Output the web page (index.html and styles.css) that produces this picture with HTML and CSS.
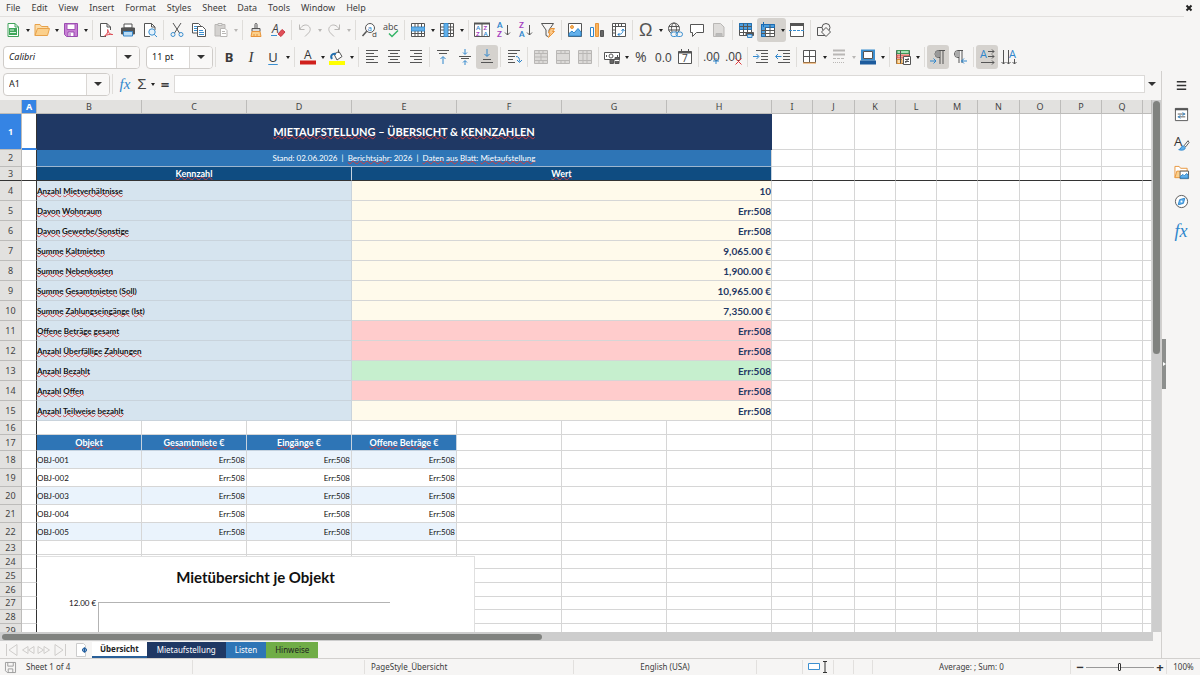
FILE: index.html
```html
<!DOCTYPE html>
<html lang="de">
<head>
<meta charset="utf-8">
<title>Mietaufstellung</title>
<link rel="stylesheet" href="styles.css">
</head>
<body>
<div class="app">
<nav class="menubar">
  <button>File</button><button>Edit</button><button>View</button><button>Insert</button><button>Format</button><button>Styles</button><button>Sheet</button><button>Data</button><button>Tools</button><button>Window</button><button>Help</button>
  <button class="close" aria-label="Close"><svg viewBox="0 0 8 8"><path d="M1.500 1.500l5 5M6.500 1.500l-5 5"/></svg></button>
</nav>

<div class="toolbar" role="toolbar" aria-label="Standard">
  <button class="tb" aria-label="New"><svg viewBox="0 0 16 16"><path d="M3 1.500h7l3.500 3.500v9.500H3z" fill="#fff" stroke="#43a35c"/><path d="M10 1.500V5h3.500" stroke="#43a35c"/><path d="M4 6h8v7H4z" fill="#3fa75a" stroke="none"/><path d="M5 8h4M5 10.500h6" stroke="#d8f2df"/></svg></button><button class="drop" aria-label="New options"></button>
  <button class="tb" aria-label="Open"><svg viewBox="0 0 16 16"><path d="M1 13.500V2.500h5l1.500 2H14v3" fill="#fbdca8" stroke="#e8a24a"/><path d="M1 13.500l2.500-7h12l-2 7z" fill="#fbd08c" stroke="#e8a24a"/></svg></button><button class="drop" aria-label="Open options"></button>
  <button class="tb" aria-label="Save"><svg viewBox="0 0 16 16"><path d="M1.500 1.500h13v13h-11l-2-2z" fill="#c77fd4" stroke="#9a4bb0"/><path d="M4 2h8v5.500H4z" fill="#fff" stroke="#a557b8"/><path d="M5 10h6v4.500H5z" fill="#fff" stroke="#9a4bb0"/><path d="M7 11v3"  stroke="#9a4bb0"/></svg></button><button class="drop" aria-label="Save options"></button>
  <span class="sep"></span>
  <button class="tb" aria-label="Export as PDF"><svg viewBox="0 0 16 16"><path d="M8 14.500H2.500v-13h6.500l3.500 3.500v3" fill="#fff"/><path d="M9 1.500V5h3.500"/><path d="M6.500 14c3-2 3.500-4 3.200-6.500.8 4 2.800 5 5 5-3.200-.5-6 .3-8.200 1.500z" stroke="#de4a53" fill="#fbd5d7"/></svg></button>
  <button class="tb" aria-label="Print"><svg viewBox="0 0 16 16"><path d="M4 2h8v4H4z" fill="#fff"/><path d="M1.500 6h13v6h-13z" fill="#555"/><path d="M3.500 9.500h9V14h-9z" fill="#b9dcf6" stroke="#3a87c8"/></svg></button>
  <button class="tb" aria-label="Print preview"><svg viewBox="0 0 16 16"><path d="M8 14.500H2.500v-13h7l3.500 3.500v3" fill="#fff"/><path d="M9.500 1.500V5H13"/><circle cx="10" cy="10" r="3.200" fill="#e3f1fb" stroke="#3b8fd0"/><path d="M12.200 12.300l2.800 2.700" stroke="#3b8fd0"/></svg></button>
  <span class="sep"></span>
  <button class="tb" aria-label="Cut"><svg viewBox="0 0 16 16"><path d="M4 1l6.500 10M12 1L5.500 11"/><circle cx="4" cy="12.500" r="2" stroke="#3b8fd0"/><circle cx="12" cy="12.500" r="2" stroke="#3b8fd0"/></svg></button>
  <button class="tb" aria-label="Copy"><svg viewBox="0 0 16 16"><path d="M1.500 1.500h6l2 2v7.500h-8z" fill="#fff"/><path d="M3 4.500h4M3 6.500h3M3 8.500h3" stroke="#3b8fd0"/><path d="M6.500 4.500h5l3 3v7h-8z" fill="#fff"/><path d="M8 8.500h4M8 10.500h5M8 12.500h5" stroke="#3b8fd0"/></svg></button>
  <button class="tb" aria-label="Paste" disabled><svg viewBox="0 0 16 16" class="dim"><path d="M2 2.500h10V14H2z" fill="#d4d2d0"/><path d="M5 1.500h4v2H5z" fill="#eee"/><path d="M7.500 6.500h4.500l2 2v6H7.500z" fill="#fff"/><path d="M9 9.500h3M9 11.500h4"/></svg></button><button class="drop" aria-label="Paste options" disabled></button>
  <span class="sep"></span>
  <button class="tb" aria-label="Clone formatting"><svg viewBox="0 0 16 16"><path d="M7 6.500V2.500c0-1.500 2-1.500 2 0v4"/><path d="M4 6.500h8v3H4z" fill="#ddd"/><path d="M4 9.500h8l1 5H3z" fill="#fbd08c" stroke="#e8943a"/><path d="M6 12v2M9 12v2" stroke="#e8943a"/></svg></button>
  <button class="tb" aria-label="Clear formatting"><svg viewBox="0 0 16 16"><text x="2" y="11" font-size="12" font-style="italic" fill="#444">A</text><path d="M1 13.500h6" stroke="#3b8fd0"/><path d="M8 12l4-4.500 3 2.500-4 4.500z" fill="#e04f58" stroke="#c93a44"/></svg></button>
  <span class="sep"></span>
  <button class="tb" aria-label="Undo" disabled><svg viewBox="0 0 16 16" class="dim"><path d="M2.500 2.500v5h5M3 7c2-4 6-5 8.500-3s2 5 0 7L8 14.500"/></svg></button><button class="drop" aria-label="Undo history" disabled></button>
  <button class="tb" aria-label="Redo" disabled><svg viewBox="0 0 16 16" class="dim"><path d="M13.500 2.500v5h-5M13 7c-2-4-6-5-8.500-3s-2 5 0 7L8 14.500"/></svg></button><button class="drop" aria-label="Redo history" disabled></button>
  <span class="sep"></span>
  <button class="tb" aria-label="Find and replace"><svg viewBox="0 0 16 16"><circle cx="9" cy="6" r="4.500" fill="#fff"/><path d="M5.700 9.200L1.500 14" stroke-width="1.500"/><text x="6.500" y="8.500" font-size="8" fill="#2f86cc">a</text><text x="11" y="15" font-size="8" fill="#444">d</text></svg></button>
  <button class="tb" aria-label="Spelling"><svg viewBox="0 0 16 16"><text x="0" y="8" font-size="9" fill="#444">abc</text><path d="M6 11.500l3 3 6-6" stroke="#35b567" stroke-width="1.500"/></svg></button>
  <span class="sep"></span>
  <button class="tb" aria-label="Row"><svg viewBox="0 0 16 16"><path d="M1.500 1.500h13v13h-13z" fill="#fff"/><path d="M1.500 5h13v4h-13z" fill="#63b0ea" stroke="#3b8fd0"/><path d="M1.500 11.500h13M5 1.500V5M8 1.500V5M11.500 1.500V5M5 9v5.500M8 9v5.500M11.500 9v5.500"/></svg></button><button class="drop" aria-label="Row options"></button>
  <button class="tb" aria-label="Column"><svg viewBox="0 0 16 16"><path d="M1.500 1.500h13v13h-13z" fill="#fff"/><path d="M5 1.500h4v13H5z" fill="#63b0ea" stroke="#3b8fd0"/><path d="M11.500 1.500v13M1.500 5H5M1.500 8H5M1.500 11.500H5M9 5h5.500M9 8h5.500M9 11.500h5.500"/></svg></button><button class="drop" aria-label="Column options"></button>
  <span class="sep"></span>
  <button class="tb" aria-label="Sort"><svg viewBox="0 0 16 16" class="az"><path d="M.5 1.500h15v13H.5z" fill="#fff"/><path d="M0 1.500h16" stroke-width="2"/><path d="M8 2v12.500"/><text x="2" y="8" font-size="6" fill="#2f86cc">A</text><text x="2" y="14" font-size="6" fill="#a53fc0">Z</text><text x="9.500" y="8" font-size="6" fill="#a53fc0">Z</text><text x="9.500" y="14" font-size="6" fill="#2f86cc">A</text></svg></button>
  <button class="tb" aria-label="Sort ascending"><svg viewBox="0 0 16 16" class="az"><text x="1" y="6" font-size="8" fill="#2f86cc">A</text><text x="1" y="15" font-size="8" fill="#a53fc0">Z</text><path d="M11.500 3v10M9 10.500l2.500 2.500 2.500-2.500"/></svg></button>
  <button class="tb" aria-label="Sort descending"><svg viewBox="0 0 16 16" class="az"><text x="1" y="6" font-size="8" fill="#a53fc0">Z</text><text x="1" y="15" font-size="8" fill="#2f86cc">A</text><path d="M11.500 3v10M9 10.500l2.500 2.500 2.500-2.500"/></svg></button>
  <button class="tb" aria-label="AutoFilter"><svg viewBox="0 0 16 16"><path d="M1.500 1.500h12L9 8v3M1.500 1.500L6 8v5.500l2 1" fill="none"/><path d="M10.500 6.500h4l-2 3h2l-6 6 1.500-4.500H8.500z" fill="#fbc98a" stroke="#e8943a"/></svg></button>
  <span class="sep"></span>
  <button class="tb" aria-label="Image"><svg viewBox="0 0 16 16"><path d="M1.500 1.500h13v13h-13z" fill="#fff"/><circle cx="5" cy="5" r="1.500" fill="#f7b55c" stroke="#e8943a"/><path d="M2 14v-2.500l3-2.500 2 2 4-4.500 3 3.500v4z" fill="#63b0ea" stroke="#2f86cc"/></svg></button>
  <button class="tb" aria-label="Chart"><svg viewBox="0 0 16 16"><path d="M1.500 5.500h3v9h-3z" fill="#fff" stroke="#2f86cc"/><path d="M6.500 1.500h3v13h-3z" fill="#f9b45d" stroke="#e8943a"/><path d="M11.500 8.500h3v6h-3z" fill="#666"/></svg></button>
  <button class="tb" aria-label="Pivot table"><svg viewBox="0 0 16 16"><path d="M1.500 1.500h13v13h-13z" fill="#fff"/><path d="M1.500 4.500h13M4.500 1.500v13M7.500 2v2M10.500 2v2M2 8h2M2 11h2" /><path d="M7 12.500c4 0 5-2 5-5M10.500 9L12 7l1.500 2M8.500 11L7 12.500 8.500 14" stroke="#2f86cc"/></svg></button>
  <span class="sep"></span>
  <button class="tb" aria-label="Special character"><svg viewBox="0 0 16 16"><text class="symbol" x="1" y="14" fill="#555">Ω</text></svg></button><button class="drop" aria-label="Special character options"></button>
  <button class="tb" aria-label="Hyperlink"><svg viewBox="0 0 16 16"><circle cx="7" cy="6.500" r="5.500"/><ellipse cx="7" cy="6.500" rx="2.500" ry="5.500"/><path d="M2 4.500h10M1.500 8h11"/><rect x="4" y="10" width="6.500" height="4.500" rx="2.200" fill="#f6f5f4" stroke="#3b8fd0"/><rect x="9" y="10" width="6.500" height="4.500" rx="2.200" stroke="#3b8fd0"/></svg></button>
  <button class="tb" aria-label="Comment"><svg viewBox="0 0 16 16"><path d="M1.500 2.500h13v8H7.500l-4 4v-4h-2z" fill="#fff"/></svg></button>
  <button class="tb" aria-label="Headers and footers" disabled><svg viewBox="0 0 16 16" class="dim"><path d="M2.500 1.500h7l3.500 3.500v9.500H2.500z" fill="#dedcda"/><path d="M5 11.500h6v3H5z" fill="#bbb"/></svg></button>
  <span class="sep"></span>
  <button class="tb" aria-label="Define print area"><svg viewBox="0 0 16 16"><path d="M1.500 1.500h12v12h-12z" fill="#fff"/><path d="M1.500 1.500h12v6h-12z" fill="#4d9fdf" stroke="#2370b0"/><path d="M1.500 4.500h12M1.500 10.500h12M5.500 1.500v12M9.500 1.500v12"/><path d="M8 10.500h7.500v3H8z" fill="#555"/><path d="M9.500 12.500h4.500v3H9.500z" fill="#b9dcf6" stroke="#3a87c8"/></svg></button>
  <span class="on"><button class="tb" aria-label="Freeze rows and columns"><svg viewBox="0 0 16 16"><path d="M1.500 2.500h13v12h-13z" fill="#fff"/><path d="M1.500 2.500h13v3H5.500v9h-4z" fill="#4d9fdf" stroke="#1c6cb3"/><path d="M5.500 8.500h9M5.500 11.500h9M10 3v11.500M1.500 8.500h4M1.500 11.500h4M5.500 5.500v9"/><path d="M3.500 0v5M1 2.500h5" stroke="#1c6cb3"/></svg></button><button class="drop" aria-label="Freeze options"></button></span>
  <button class="tb" aria-label="Split window"><svg viewBox="0 0 16 16"><path d="M1.500 1.500h13v13h-13z" fill="#fff"/><path d="M1 2.500h14" stroke-width="3"/><path d="M0 8.500h16" stroke="#3b8fd0" stroke-dasharray="3 1"/></svg></button>
  <span class="sep"></span>
  <button class="tb" aria-label="Show draw functions"><svg viewBox="0 0 16 16"><path d="M1.500 5.500h8v8h-8z"/><circle cx="10" cy="5.500" r="4" fill="#f6f5f4"/><path d="M10 5.500l4.500 4.500-4.500 4.500L5.500 10z" fill="#f6f5f4"/></svg></button>
</div>

<div class="toolbar" role="toolbar" aria-label="Formatting">
  <span class="combo font-name"><input class="italic" aria-label="Font name" value="Calibri"><button aria-label="Font list"></button></span>
  <span class="combo font-size"><input aria-label="Font size" value="11 pt"><button aria-label="Size list"></button></span>
  <span class="sep"></span>
  <button class="tb letter bold">B</button>
  <button class="tb letter ital">I</button>
  <button class="tb letter under">U</button><button class="drop" aria-label="Underline options"></button>
  <span class="sep"></span>
  <button class="tb" aria-label="Font color"><svg viewBox="0 0 16 16"><text x="4" y="10" font-size="12" fill="#333">A</text><path d="M0 11.500h16v4H0z" fill="#d0201c" stroke="none"/></svg></button><button class="drop" aria-label="Font color options"></button>
  <button class="tb" aria-label="Highlighting"><svg viewBox="0 0 16 16"><path d="M0 12h16v4H0z" fill="#ffff00" stroke="none"/><path d="M5 5l5-2.500 3 5-5 3.500z" fill="#fff"/><path d="M9.500 4V.5"/><path d="M3 10c-2-3 0-6 4-5" stroke="#2370b0" stroke-width="2"/></svg></button><button class="drop" aria-label="Highlighting options"></button>
  <span class="sep"></span>
  <button class="tb" aria-label="Align left"><svg viewBox="0 0 16 16"><path d="M2 1.500h12M2 4.500h8M2 7.500h12M2 10.500h8M2 13.500h12"/></svg></button>
  <button class="tb" aria-label="Center"><svg viewBox="0 0 16 16"><path d="M2 1.500h12M4 4.500h8M2 7.500h12M4 10.500h8M2 13.500h12"/></svg></button>
  <button class="tb" aria-label="Align right"><svg viewBox="0 0 16 16"><path d="M2 1.500h12M6 4.500h8M2 7.500h12M6 10.500h8M2 13.500h12"/></svg></button>
  <span class="sep"></span>
  <button class="tb" aria-label="Align top"><svg viewBox="0 0 16 16"><path d="M2 1.500h12M4 4.500h8"/><path d="M8 15V8M5.500 10L8 7.500l2.500 2.500" stroke="#2f86cc"/></svg></button>
  <button class="tb" aria-label="Center vertically"><svg viewBox="0 0 16 16"><path d="M2 7.500h12M4 9.500h8"/><path d="M8 0v5M6 3.500l2 2 2-2M8 16v-4M6 13.500l2-2 2 2" stroke="#2f86cc"/></svg></button>
  <button class="tb on" aria-label="Align bottom"><svg viewBox="0 0 16 16"><path d="M2 13.500h12M4 10.500h8"/><path d="M8 0v7M5.500 5L8 7.500 10.500 5" stroke="#2f86cc"/></svg></button>
  <span class="sep"></span>
  <button class="tb" aria-label="Wrap text"><svg viewBox="0 0 16 16"><path d="M2 1.500h12M2 4.500h9M2 7.500h7M2 10.500h5M2 13.500h7"/><path d="M10 7.500c3 0 3.500 2 3.500 5M11 11l2.500 2.500L16 11" stroke="#2f86cc"/></svg></button>
  <span class="sep"></span>
  <button class="tb" aria-label="Merge and center" disabled><svg viewBox="0 0 16 16" class="dim"><path d="M1.500 1.500h13v13h-13z" fill="#dcdad8"/><path d="M1.500 4.500h13M1.500 11.500h13M6 1.500v3M10 1.500v3M6 11.500v3M10 11.500v3M1.500 8h13M8 4.500v7"/></svg></button>
  <button class="tb" aria-label="Merge cells" disabled><svg viewBox="0 0 16 16" class="dim"><path d="M1.500 1.500h13v13h-13z" fill="#dcdad8"/><path d="M1.500 4.500h13M1.500 11.500h13M6 1.500v3M10 1.500v3M6 11.500v3M10 11.500v3"/></svg></button>
  <button class="tb" aria-label="Unmerge cells" disabled><svg viewBox="0 0 16 16" class="dim"><path d="M1.500 1.500h13v13h-13z" fill="#dcdad8"/><path d="M1.500 4.500h13M1.500 11.500h13M6 1.500v13M10 1.500v13"/></svg></button>
  <span class="sep"></span>
  <button class="tb" aria-label="Currency"><svg viewBox="0 0 16 16"><path d="M.5 3.500h15v7H.5z" fill="#fff"/><circle cx="7" cy="7" r="2"/><path d="M2.500 6v2M13.500 6v2"/><path d="M11 8.500h4v6h-4zM6 10.500h3.500v4H6z" fill="#666"/><path d="M11 11.500h4" stroke="#fff"/></svg></button><button class="drop" aria-label="Currency options"></button>
  <button class="tb" aria-label="Percent"><svg viewBox="0 0 16 16"><text x="2" y="13" font-size="14" fill="#444">%</text></svg></button>
  <button class="tb" aria-label="Number"><svg viewBox="0 0 16 16"><text class="thin" x="0" y="13" fill="#444">0.0</text></svg></button>
  <button class="tb" aria-label="Date"><svg viewBox="0 0 16 16"><path d="M1.500 2.500h13v12h-13z" fill="#fff"/><path d="M1.500 3.500h13" stroke-width="2"/><path d="M4.500 0v3M11.500 0v3"/><text x="5" y="13" font-size="10" fill="#444">7</text></svg></button>
  <span class="sep"></span>
  <button class="tb" aria-label="Add decimal place"><svg viewBox="0 0 16 16"><text class="thin" x="-1" y="12" fill="#444">.00</text><path d="M12 9v6M9 12h6" stroke="#2f86cc"/></svg></button>
  <button class="tb" aria-label="Delete decimal place"><svg viewBox="0 0 16 16"><text class="thin" x="-1" y="12" fill="#444">.00</text><path d="M9.500 9.500l6 6M15.500 9.500l-6 6" stroke="#e0383c"/></svg></button>
  <span class="sep"></span>
  <button class="tb" aria-label="Increase indent"><svg viewBox="0 0 16 16"><path d="M3 1.500h12M8 4.500h7M8 7.500h7M8 10.500h7M3 13.500h12"/><path d="M0 7.500h5.500M3.500 5l2.500 2.500L3.500 10" stroke="#2f86cc"/></svg></button>
  <button class="tb" aria-label="Decrease indent"><svg viewBox="0 0 16 16"><path d="M3 1.500h12M8 4.500h7M8 7.500h7M8 10.500h7M3 13.500h12"/><path d="M1 7.500h5.500M3 5L.5 7.500 3 10" stroke="#2f86cc"/></svg></button>
  <span class="sep"></span>
  <button class="tb" aria-label="Borders"><svg viewBox="0 0 16 16"><path d="M1.500 1.500h12v12h-12z" fill="#fff" stroke="#555"/><path d="M7.500 1.500v12M1.500 7.500h12"/><path d="M1 14h13" stroke="#e8943a"/></svg></button><button class="drop" aria-label="Border options"></button>
  <button class="tb" aria-label="Border style" disabled><svg viewBox="0 0 16 16" class="dim"><path d="M2 1.500h12M2 5.500h12" stroke-width="2"/><path d="M2 9.500h12" stroke-dasharray="3 1"/><path d="M2 13.500h12" stroke-dasharray="1 1"/></svg></button><button class="drop" aria-label="Border style options" disabled></button>
  <button class="tb" aria-label="Border color"><svg viewBox="0 0 16 16"><path d="M2 1.500h12v9H2z" fill="#fff" stroke="#3b8fd0" stroke-width="2"/><path d="M3.500 2.500h9v7h-9z"/><path d="M0 11.500h16v4H0z" fill="#1d5b9d" stroke="none"/></svg></button><button class="drop" aria-label="Border color options"></button>
  <span class="sep"></span>
  <button class="tb" aria-label="Conditional formatting"><svg viewBox="0 0 16 16"><path d="M1.500 1.500h13v13h-13z" fill="#fff"/><path d="M2 1.500h12v3H2z" fill="#a8e3b8" stroke="#3d9957"/><path d="M2 6h12v3H2z" fill="#f6a59c" stroke="#cf5146"/><path d="M2 10.500h5v4H2z" fill="#fbdca8" stroke="#d98d32"/><path d="M5.500 1.500v13"/><path d="M8.500 7.500h7v8h-7z" fill="#fff"/><path d="M10 10.500h4M10 12.500h4M13.500 9l-3 5"/></svg></button><button class="drop" aria-label="Conditional options"></button>
  <span class="sep"></span>
  <button class="tb on" aria-label="Left to right"><svg viewBox="0 0 16 16"><path d="M15 1.500H8.500a3.500 3.500 0 0 0 0 7H10M10 1.500V15M13 1.500V15"/><path d="M9 2H8a3 3 0 0 0 0 6h1z" fill="#999" stroke="none"/><path d="M0 12h5.500M3.500 9.500L6 12l-2.500 2.500" stroke="#2f86cc"/></svg></button>
  <button class="tb" aria-label="Right to left"><svg viewBox="0 0 16 16"><path d="M11 1.500H6a3.500 3.500 0 0 0 0 7h1M7 1.500V14M10 1.500V14"/><path d="M7 2H6a3 3 0 0 0 0 6h1z" fill="#aaa" stroke="none"/><path d="M15 12H9.500M12 9.500L9.500 12l2.500 2.500" stroke="#2f86cc"/></svg></button>
  <span class="sep"></span>
  <button class="tb on" aria-label="Text direction left to right"><svg viewBox="0 0 16 16"><text x="1" y="9" font-size="11" fill="#2f86cc">A</text><path d="M9 2.500h6M9 7.500h6M2 13.500h13M13 .5l2 2-2 2M13 5.500l2 2-2 2M13 11.500l2 2-2 2"/></svg></button>
  <button class="tb" aria-label="Text direction top to bottom"><svg viewBox="0 0 16 16"><text x="8" y="9" font-size="11" fill="#2f86cc">A</text><path d="M2.500 1v14M7.500 1v14M13.500 10v5M.5 13l2 2 2-2M5.500 13l2 2 2-2M11.500 13l2 2 2-2"/></svg></button>
</div>

<div class="workspace">
  <main class="document">
    <div class="formula-bar">
      <span class="combo name-box"><input aria-label="Name box" value="A1"><button aria-label="Name list"></button></span>
      <span class="sep"></span>
      <button class="tb fx" aria-label="Function wizard">fx</button>
      <button class="tb sigma" aria-label="Select function">Σ</button><button class="drop" aria-label="Function options"></button>
      <button class="tb equals" aria-label="Formula">=</button>
      <input class="formula" aria-label="Input line">
      <button class="expand" aria-label="Expand formula bar"></button>
    </div>
    <div class="sheet">
      <div class="canvas">
        <table class="grid" id="grid"></table>
        <figure class="chart">
          <figcaption>Mietübersicht je Objekt</figcaption>
          <div class="plot"><span>12.00 €</span><div class="axis"></div></div>
        </figure>
      </div>
      <div class="vscroll"><div class="vthumb"></div></div>
    </div>
    <div class="hscroll"><div class="hthumb"></div></div>
    <div class="tabs">
      <div class="tab-nav">
        <button aria-label="First sheet"><svg viewBox="0 0 14 14"><path d="M1.500 1v12M12 1.500L4 7l8 5.500z"/></svg></button>
        <button aria-label="Previous sheet"><svg viewBox="0 0 14 14"><path d="M7 3.500L1.500 7 7 10.500zM13 3.500L7.500 7l5.500 3.500z"/></svg></button>
        <button aria-label="Next sheet"><svg viewBox="0 0 14 14"><path d="M1 3.500L6.500 7 1 10.500zM7 3.500L12.500 7 7 10.500z"/></svg></button>
        <button aria-label="Last sheet"><svg viewBox="0 0 14 14"><path d="M12.500 1v12M2 1.500L10 7l-8 5.500z"/></svg></button>
      </div>
      <button class="add" aria-label="Add sheet"><svg viewBox="0 0 14 14"><path d="M1.500.5h7l2 2v11h-9z" fill="#fff" stroke="#ccc"/><circle cx="9.500" cy="7" r="2" fill="#fff" stroke="#1d5b9d"/><path d="M9.500 4.500v5M7 7h5" stroke="#1d5b9d"/></svg></button>
      <button class="tab active">Übersicht</button><button class="tab navy">Mietaufstellung</button><button class="tab blue">Listen</button><button class="tab green">Hinweise</button>
    </div>
  </main>
  <aside class="sidebar">
    <button aria-label="Sidebar settings"><svg viewBox="0 0 16 16"><path d="M3 4h10M3 8h10M3 12h10" stroke="#333" stroke-width="1.500"/></svg></button>
    <button aria-label="Properties"><svg viewBox="0 0 16 16"><path d="M1.500 1.500h13v13h-13z" fill="#fff"/><path d="M1 2.500h14" stroke-width="2"/><path d="M4 7.500h8M4 10.500h8" /><path d="M9 6l2.500 1.500L9 9M7 9l-2.500 1.500L7 12" stroke="#2f86cc"/></svg></button>
    <button aria-label="Styles"><svg viewBox="0 0 16 16"><text x="0" y="11" font-size="14" fill="#333">A</text><path d="M15 5l-4 5 1.500 1.500L16 7z" fill="#fff"/><path d="M5 14.500c3 0 2-4 5-4l2 2c0 3-5 3-7 2z" fill="#63b0ea" stroke="#2f86cc"/></svg></button>
    <button aria-label="Gallery"><svg viewBox="0 0 16 16"><path d="M1 13.500v-12h4.500l1.500 2h7v3" fill="#fff" stroke="#e8943a"/><path d="M1 13.500l2-7h12v7z" fill="#fbd08c" stroke="#e8943a"/><path d="M6.500 6.500h9v8h-9z" fill="#fff"/><path d="M7 14v-2l2.500-2 1.500 1.500L13.500 9l1.500 2v3z" fill="#63b0ea" stroke="#2f86cc"/></svg></button>
    <button aria-label="Navigator"><svg viewBox="0 0 16 16"><circle cx="8" cy="8" r="6.500" fill="#fff"/><path d="M11.500 4.500L10 10l-5.500 1.500L6 6z" fill="#63b0ea" stroke="#2f86cc"/><circle cx="8" cy="8" r="1" fill="#fff" stroke="none"/></svg></button>
    <button class="fx" aria-label="Functions">fx</button>
    <button class="handle" aria-label="Hide sidebar"></button>
  </aside>
</div>

<footer class="status">
  <span class="centered"><svg class="disk" viewBox="0 0 12 12"><path d="M.5.5h11v11h-9l-2-2zM3 .5v4h6v-4M3.500 11.500v-4h5v4"/></svg></span>
  <span>Sheet 1 of 4</span>
  <span></span>
  <span>PageStyle_Übersicht</span>
  <span class="centered">English (USA)</span>
  <span></span>
  <span class="centered"><svg class="insert" viewBox="0 0 20 12"><path d="M.5 2.500h11v6H.5z" fill="#fff" stroke="#3b8fd0"/><path d="M15 .5h4M17 .5v11M15 11.500h4" stroke="#333"/></svg></span>
  <span></span>
  <span></span>
  <span class="centered">Average: ; Sum: 0</span>
  <span class="zoom"><button aria-label="Zoom out">−</button><input type="range" aria-label="Zoom" min="0" max="100" value="49"><button aria-label="Zoom in">+</button></span>
  <span class="centered">100%</span>
</footer>
</div>
<script src="sheet.js"></script>
</body>
</html>
```
FILE: styles.css
```css
* { box-sizing: border-box; }
body { margin: 0; background: #f6f5f4; color: #3c3c3c; font: 9px/12px "Noto Sans", "Open Sans", sans-serif; }
button, input { font: inherit; color: inherit; border: 0; padding: 0; margin: 0; background: none; min-width: 0; }
button { display: inline-flex; align-items: center; justify-content: center; }
svg { display: block; fill: none; stroke: #555; overflow: visible; }
svg text { stroke: none; font-family: "Open Sans", sans-serif; }
svg .thin { font-family: "Liberation Sans", sans-serif; font-size: 12px; }
svg .symbol { font-family: "Liberation Sans", sans-serif; font-size: 18px; }
svg.az text { font-family: Lato, sans-serif; font-weight: 700; }
svg.dim { stroke: #b9b7b5; }

.app { display: flex; flex-direction: column; height: 100vh; overflow: hidden; }

.menubar { display: flex; align-items: center; gap: 11px; height: 17px; padding-left: 6px; margin-right: 16px; border-bottom: 1px solid #e2e0de; flex: none; }
.menubar .close { margin-left: auto; margin-right: -9px; }
.close svg { width: 8px; height: 8px; stroke: #222; stroke-width: 2; }

.toolbar { display: flex; align-items: center; height: 27px; padding: 0 0 1px 2px; flex: none; }
.tb { width: 22px; height: 24px; flex: none; border-radius: 3px; }
.tb svg { width: 16px; height: 16px; }
.drop { width: 7px; height: 24px; flex: none; }
.drop::before { content: ""; border: 2px solid transparent; border-top: 3px solid #222; border-bottom: 0; }
.drop:disabled::before { border-top-color: #b9b7b5; }
.sep { width: 1px; height: 20px; margin: 0 2px; background: #dfddda; flex: none; }
.drop + .sep { margin-left: 3px; }
.on { display: inline-flex; background: #d5d2ce; border-radius: 3px; }
.letter { font-size: 13px; color: #3a3a3a; }
.bold { font-weight: 700; }
.ital { font-family: "Liberation Serif", serif; font-style: italic; font-size: 15px; }
.under { text-decoration: underline #3b8fd0; text-underline-offset: 2px; }

.combo { display: flex; height: 23px; margin-left: 1px; background: #fff; border: 1px solid #cfccc9; border-radius: 4px; flex: none; overflow: hidden; }
.combo input { flex: 1; padding-left: 5px; color: #222; }
.combo button { width: 23px; border-left: 1px solid #dad7d4; background: #f9f8f7; }
.combo button::before, .expand::before { content: ""; border: 4px solid transparent; border-top: 4px solid #333; border-bottom: 0; }
.italic { font-style: italic; }
.font-name { width: 137px; margin-right: 5px; }
.font-size { width: 67px; }
.name-box { width: 107px; }

.workspace { display: flex; flex: 1; min-height: 0; }
.document { display: flex; flex-direction: column; flex: 1; min-width: 0; border-right: 1px solid #d2d0ce; }

.formula-bar { display: flex; align-items: center; padding: 1px 3px 4px 2px; height: 29px; flex: none; }
.fx { font-family: "Liberation Serif", serif; font-style: italic; font-size: 15px; color: #2f86cc; }
.formula-bar .fx { width: 20px; }
.formula-bar .sigma { width: 14px; font-family: "Liberation Sans", sans-serif; font-size: 15px; color: #444; }
.formula-bar .equals { font-size: 15px; font-weight: 700; width: 18px; }
.formula { flex: 1; height: 18px; background: #fff; border: 1px solid #dcdad8; }
.expand { width: 13px; height: 18px; }

.sheet { display: flex; flex: 1; min-height: 0; }
.canvas { position: relative; flex: 1; min-width: 0; overflow: hidden; background: #fff; }
.grid { width: 100%; table-layout: fixed; border-collapse: separate; border-spacing: 0; }
.grid th, .grid td { height: 14px; padding: 0; overflow: hidden; white-space: nowrap; line-height: 10px; border-right: 1px solid #d6d6d6; border-bottom: 1px solid #d6d6d6; }
.c-head { width: 22px; }
.c-a { width: 15px; }
.c-wide { width: 105px; }
.c-std { width: 41px; }
.c-std2 { width: 42px; }
.grid th { background: #e2e1df; border-color: #bdbcba; font-weight: 400; color: #444; }
.grid th.sel { background: #3584e4; color: #fff; font-weight: 700; }
.grid .h13 > * { height: 13px; }
.grid .h16 > * { height: 16px; }
.grid .h17 > * { height: 17px; }
.grid .h18 > * { height: 18px; }
.grid .h20 > * { height: 20px; }
.grid .h36 > * { height: 36px; }
.grid td { font-family: Lato, "Open Sans", sans-serif; font-size: 8px; color: #111; }
.grid td.col-a { border-right-color: #333; }
.grid td.cursor { border-bottom: 2px solid #3584e4; }
.grid .frozen > * { border-bottom-color: #333; }
.grid td.title { background: #1f3864; border-color: #1f3864; color: #fff; font-size: 11px; font-weight: 700; text-align: center; }
.grid td.subtitle { background: #2e75b6; border-bottom-color: #9db6cf; color: #fff; text-align: center; }
.grid td.head { background: #0f4c81; border-right-color: #c5d2df; color: #fff; font-size: 9px; font-weight: 700; text-align: center; }
.grid td.thead { background: #2e75b6; border-color: #c5d2df; color: #fff; font-size: 9px; font-weight: 700; text-align: center; }
.grid td.label { background: #d6e4ef; border-color: #c9d3dc; font-weight: 700; }
.grid td.value { background: #fffaeb; font-size: 10px; font-weight: 700; text-align: right; color: #1f3864; }
.grid td.bad { background: #ffcccc; }
.grid td.good { background: #c6efce; }
.grid td.num { text-align: right; padding-right: 1px; }
.grid td.band { background: #eaf3fc; }
.spell { text-decoration: underline wavy #d23b3b 1px; text-underline-offset: -1px; text-decoration-skip-ink: none; }

.chart { position: absolute; left: 37px; top: 456px; width: 438px; height: 220px; margin: 0; padding: 12px 84px 0 32px; background: #fff; border: 1px solid #e0e0e0; border-left: 0; font-family: Lato, "Open Sans", sans-serif; color: #111; }
.chart figcaption { font-size: 15px; line-height: 16px; font-weight: 700; text-align: center; margin-left: 52px; }
.plot { display: flex; margin-top: 12px; font-size: 8px; gap: 2px; }
.axis { flex: 1; height: 170px; margin-top: 5px; border-top: 1px solid #b3b3b3; border-left: 1px solid #b3b3b3; }

.vscroll { width: 9px; padding: 1px; background: #cdcdcd; flex: none; }
.vthumb { height: 253px; background: #80827f; border-radius: 4px; }
.hscroll { height: 9px; margin-right: 8px; padding: 2px 2px 1px; background: #cdcdcd; flex: none; }
.hthumb { width: 47%; height: 6px; background: #80827f; border-radius: 4px; }

.tabs { display: flex; height: 17px; padding: 1px 0 0 5px; font-size: 8px; flex: none; }
.tab-nav { display: flex; width: 70px; gap: 2px; }
.tab-nav svg { width: 14px; height: 14px; stroke: #cfcdcb; }
.add { width: 17px; justify-content: flex-start; }
.add svg { width: 14px; height: 14px; }
.tab { padding: 0 10px 1px; color: #fff; }
.active { background: #fff; color: #222; font-weight: 700; padding: 0 8px; border-bottom: 2px solid #2a6099; }
.navy { background: #1f3864; }
.blue { background: #2e75b6; padding: 0 9px 1px; }
.green { background: #70ad47; color: #222; padding: 0 9px 1px; }

.sidebar { position: relative; display: flex; flex-direction: column; align-items: center; width: 38px; flex: none; }
.sidebar button { width: 24px; height: 29px; }
.sidebar svg { width: 15px; height: 15px; }
.sidebar .fx { font-size: 18px; }
.sidebar .handle { position: absolute; left: 0; top: 268px; width: 4px; height: 50px; background: #8d8f8d; }
.handle::before { content: ""; border: 2px solid transparent; border-left: 3px solid #fff; border-right: 0; }

.status { display: grid; grid-template-columns: 20px 173fr 172fr 209fr 183fr 46px 31px 20px 19px 198fr 96px 33px; align-items: center; height: 17px; border-top: 1px solid #d2d0ce; font-size: 8px; flex: none; }
.status > span { display: flex; align-items: center; height: 14px; padding-left: 6px; border-right: 1px solid #e2e0de; white-space: nowrap; }
.status > span:first-child, .status > span:last-child { border-right: 0; }
.status > .centered { justify-content: center; padding: 0; }
.disk { width: 11px; height: 11px; stroke: #999; }
.insert { width: 20px; height: 12px; }
.status .zoom { gap: 2px; padding: 0 2px 0 5px; }
.zoom button { width: 8px; font-size: 13px; font-weight: 700; color: #333; }
.zoom input { flex: 1; height: 10px; appearance: none; background: linear-gradient(#999, #999) center / 100% 1px no-repeat; }
.zoom input::-webkit-slider-thumb { appearance: none; width: 3px; height: 8px; background: #fff; border: 1px solid #333; border-radius: 1px; }
```
FILE: sheet.js
```js
const columns = ["A", "B", "C", "D", "E", "F", "G", "H", "I", "J", "K", "L", "M", "N", "O", "P", "Q", ""];

const colClass = (name) => {
  if (name === "A") return "c-a";
  if (name === "") return "";
  if (name <= "H") return "c-wide";
  return name === "J" || name === "N" ? "c-std2" : "c-std";
};

// Underlines the words between square brackets as misspelled.
const markup = (text) => text.replace(/\[(.+?)\]/g, '<span class="spell">$1</span>');

const pair = (label, value, tone) => ({
  h: 20,
  cells: [[label, 3, "label"], [value, 4, "value " + (tone || "")]],
});
const item = (name, band) => ({
  h: 18,
  cells: [[name, 1, band], ["Err:508", 1, "num " + band], ["Err:508", 1, "num " + band], ["Err:508", 1, "num " + band]],
});
const blank = (h) => ({ h: h || 14, cells: [] });

const rows = [
  { h: 36, cells: [["[MIETAUFSTELLUNG] – [ÜBERSICHT] &amp; [KENNZAHLEN]", 7, "title"]] },
  { h: 17, cells: [["Stand: 02.06.2026 &nbsp;|&nbsp; [Berichtsjahr]: 2026 &nbsp;|&nbsp; [Daten] [aus] [Blatt]: [Mietaufstellung]", 7, "subtitle"]] },
  { h: 14, frozen: true, cells: [["[Kennzahl]", 3, "head"], ["[Wert]", 4, "head"]] },
  pair("[Anzahl] [Mietverhältnisse]", "10"),
  pair("[Davon] [Wohnraum]", "Err:508"),
  pair("[Davon] [Gewerbe/Sonstige]", "Err:508"),
  pair("[Summe] [Kaltmieten]", "9,065.00 €"),
  pair("[Summe] [Nebenkosten]", "1,900.00 €"),
  pair("[Summe] [Gesamtmieten] ([Soll])", "10,965.00 €"),
  pair("[Summe] [Zahlungseingänge] ([Ist])", "7,350.00 €"),
  pair("[Offene] [Beträge] [gesamt]", "Err:508", "bad"),
  pair("[Anzahl] [Überfällige] [Zahlungen]", "Err:508", "bad"),
  pair("[Anzahl] [Bezahlt]", "Err:508", "good"),
  pair("[Anzahl] [Offen]", "Err:508", "bad"),
  pair("[Anzahl] [Teilweise] [bezahlt]", "Err:508"),
  blank(),
  { h: 16, cells: [["[Objekt]", 1, "thead"], ["[Gesamtmiete] €", 1, "thead"], ["[Eingänge] €", 1, "thead"], ["[Offene] [Beträge] €", 1, "thead"]] },
  item("OBJ-001", "band"),
  item("OBJ-002", ""),
  item("OBJ-003", "band"),
  item("OBJ-004", ""),
  item("OBJ-005", "band"),
  blank(), blank(), blank(), blank(), blank(13), blank(), blank(),
];

let html = '<colgroup><col class="c-head">' + columns.map((c) => `<col class="${colClass(c)}">`).join("") + "</colgroup>";
html += "<thead><tr><th></th>" + columns.map((c) => `<th scope="col" class="${c === "A" ? "sel" : ""}">${c}</th>`).join("") + "</tr></thead><tbody>";

rows.forEach((row, i) => {
  html += `<tr class="h${row.h} ${row.frozen ? "frozen" : ""}"><th scope="row" class="${i === 0 ? "sel" : ""}">${i + 1}</th>`;
  html += `<td class="col-a ${i === 0 ? "cursor" : ""}"></td>`;
  let used = 1;
  row.cells.forEach(([text, span, cls]) => {
    html += `<td colspan="${span}" class="${cls}">${markup(text)}</td>`;
    used += span;
  });
  for (; used < columns.length; used++) html += "<td></td>";
  html += "</tr>";
});

document.getElementById("grid").innerHTML = html + "</tbody>";
```
